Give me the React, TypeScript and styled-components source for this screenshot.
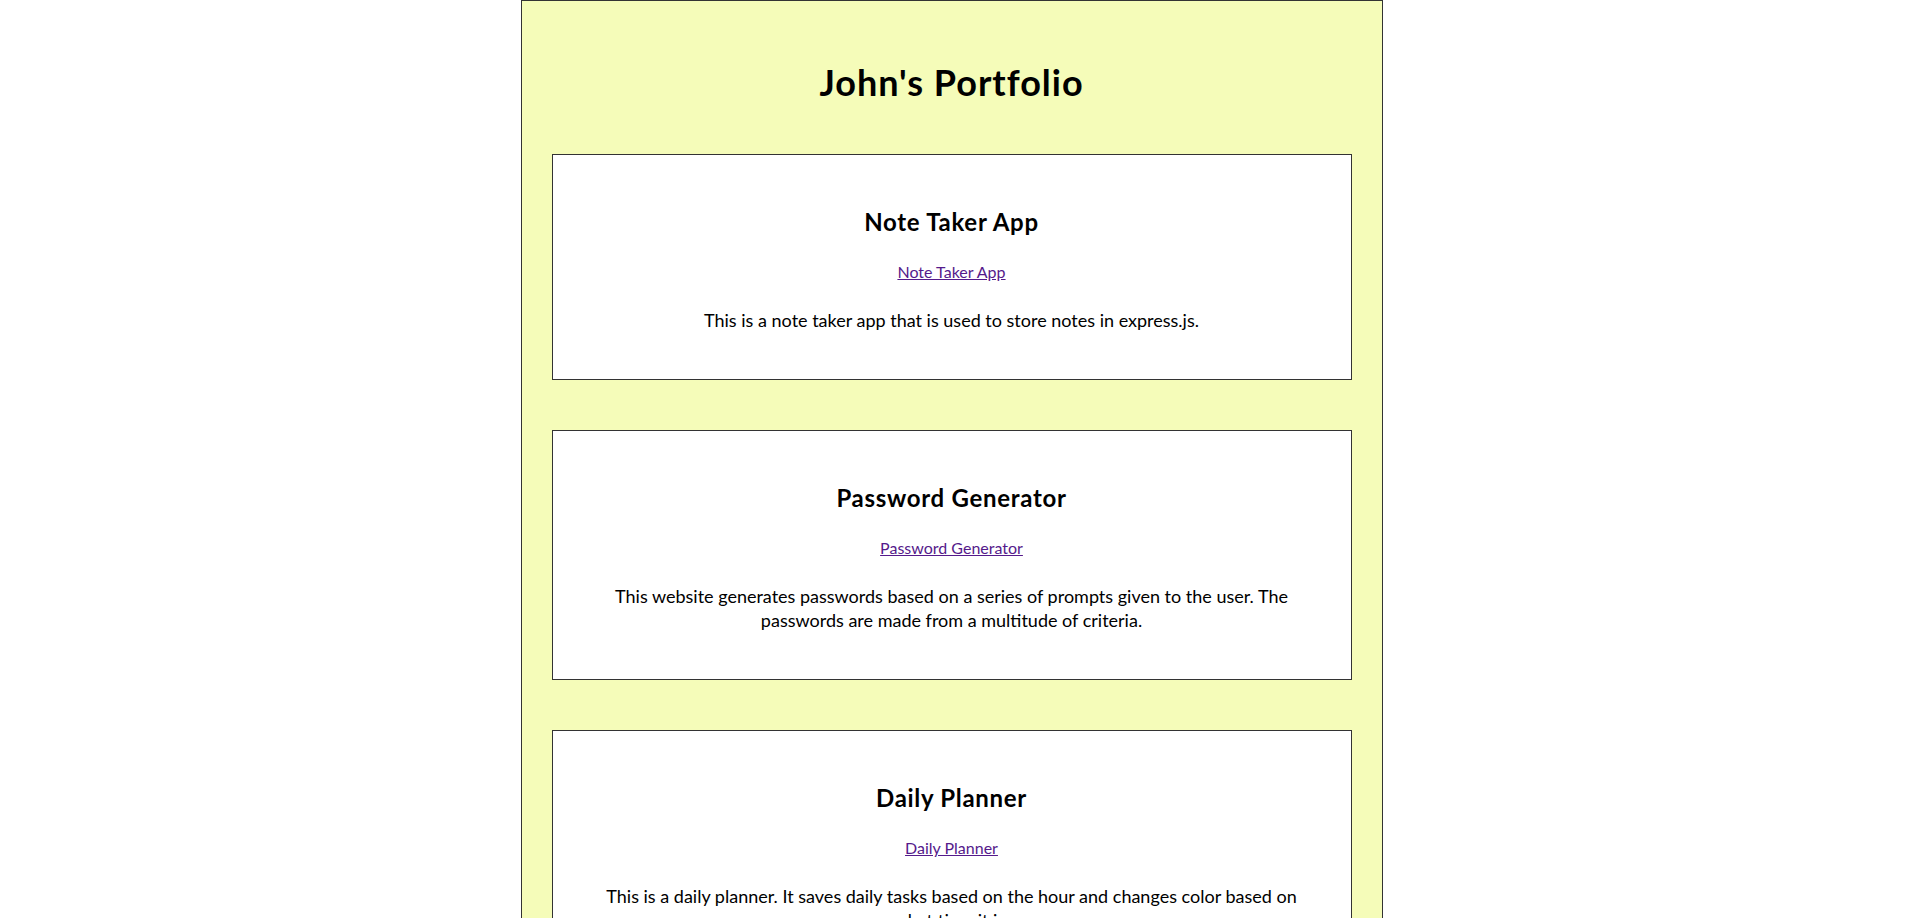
import React from "react";
import styled, { createGlobalStyle } from "styled-components";

const GlobalStyle = createGlobalStyle`
  html, body {
    margin: 0;
    padding: 0;
    background: #ffffff;
    font-family: Lato, "Open Sans", "Noto Sans", sans-serif;
    color: #000000;
  }
  /* the reference keeps an 8px scrollbar gutter on the right */
  body {
    padding-right: 8px;
  }
  ::-webkit-scrollbar {
    width: 8px;
  }
  ::-webkit-scrollbar-track {
    background: #f0f0f0;
  }
  ::-webkit-scrollbar-thumb {
    background: #c9c9c9;
  }
`;

const Page = styled.main`
  width: 800px;
  margin: 0 auto;
  padding: 60px 30px 20px;
  background: #f5fcb9;
  border: 1px solid #333333;
`;

const Title = styled.h1`
  margin: 0 0 51px;
  font-size: 36px;
  line-height: 42px;
  font-weight: 700;
  letter-spacing: 1px;
  text-align: center;
`;

const Card = styled.section`
  background: #ffffff;
  border: 1px solid #333333;
  padding: 51px 40px 47px;
  margin-bottom: 50px;
  text-align: center;
`;

const CardTitle = styled.h2`
  margin: 0 0 23px;
  font-size: 24px;
  line-height: 32px;
  font-weight: 700;
  letter-spacing: 0.7px;
`;

const LinkRow = styled.p`
  margin: 0 0 26px;
  font-size: 16px;
  line-height: 21px;

  a {
    color: #551a8b;
    text-decoration: underline;
  }
`;

const Description = styled.p`
  margin: 0;
  font-size: 18px;
  line-height: 24px;
`;

type Project = {
  name: string;
  href: string;
  text: string;
};

const projects: Project[] = [
  {
    name: "Note Taker App",
    href: "#note-taker",
    text: "This is a note taker app that is used to store notes in express.js.",
  },
  {
    name: "Password Generator",
    href: "#password-generator",
    text: "This website generates passwords based on a series of prompts given to the user. The passwords are made from a multitude of criteria.",
  },
  {
    name: "Daily Planner",
    href: "#daily-planner",
    text: "This is a daily planner. It saves daily tasks based on the hour and changes color based on what time it is.",
  },
];

export default function App() {
  return (
    <>
      <GlobalStyle />
      <Page>
        <Title>John's Portfolio</Title>
        {projects.map((p) => (
          <Card key={p.name}>
            <CardTitle>{p.name}</CardTitle>
            <LinkRow>
              <a href={p.href}>{p.name}</a>
            </LinkRow>
            <Description>{p.text}</Description>
          </Card>
        ))}
      </Page>
    </>
  );
}
